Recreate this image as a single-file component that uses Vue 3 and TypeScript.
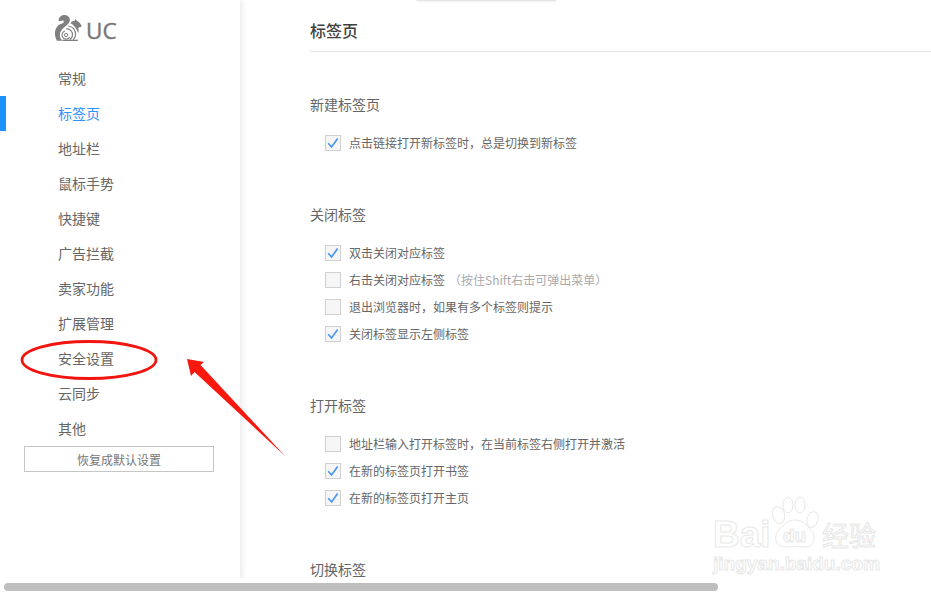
<script setup lang="ts">
interface Opt { label: string; note?: string; checked: boolean }
interface Group { title: string; options: Opt[] }

const navItems: string[] = ['常规', '标签页', '地址栏', '鼠标手势', '快捷键', '广告拦截', '卖家功能', '扩展管理', '安全设置', '云同步', '其他']
const activeNav = '标签页'

const groups: Group[] = [
  { title: '新建标签页', options: [{ label: '点击链接打开新标签时，总是切换到新标签', checked: true }] },
  {
    title: '关闭标签',
    options: [
      { label: '双击关闭对应标签', checked: true },
      { label: '右击关闭对应标签', note: '（按住Shift右击可弹出菜单）', checked: false },
      { label: '退出浏览器时，如果有多个标签则提示', checked: false },
      { label: '关闭标签显示左侧标签', checked: true },
    ],
  },
  {
    title: '打开标签',
    options: [
      { label: '地址栏输入打开标签时，在当前标签右侧打开并激活', checked: false },
      { label: '在新的标签页打开书签', checked: true },
      { label: '在新的标签页打开主页', checked: true },
    ],
  },
  { title: '切换标签', options: [] },
]
</script>

<template>
  <div class="page">
    <div class="body">
      <aside class="side">
        <div class="logo">
          <svg class="squirrel" viewBox="0 0 80 78" width="27" height="26">
            <path fill="#808080" d="M5 77C-3 62-3 44 8 32 15 25 25 26 26 20 26 15 20 16 15 19 9 20 9 12 14 6 22-3 37-2 43 9 47 18 41 26 33 32 23 39 14 49 14 60 14 67 17 73 22 77Z" />
            <circle cx="33" cy="60" r="5" fill="none" stroke="#808080" stroke-width="3" />
            <path fill="none" stroke="#808080" stroke-width="3.5" d="M44 66A12.5 12.5 0 1 1 29 48" />
            <path fill="none" stroke="#808080" stroke-width="3.5" d="M33 41C45 41 53 50 52 61 51 67 48 71 44 74" />
            <path fill="none" stroke="#808080" stroke-width="3.5" d="M39 33C53 34 63 46 61 61 60 67 57 71 54 74" />
            <path fill="#808080" d="M46 25C49 19 53 17 58 18L61 12 66 18C73 21 77 28 80 34 75 37 71 38 69 38 71 44 71 50 69 54 64 40 56 30 46 25Z" />
            <path fill="#808080" d="M22 74H68V78H22Z" />
          </svg>
          <span class="uc">UC</span>
        </div>
        <nav class="nav">
          <a v-for="item in navItems" :key="item" class="nav-item" :class="{ active: item === activeNav }">{{ item }}</a>
        </nav>
        <button class="reset" type="button">恢复成默认设置</button>
      </aside>
      <main class="main">
        <h1 class="title">标签页</h1>
        <section v-for="g in groups" :key="g.title" class="group">
          <h2 class="group-title">{{ g.title }}</h2>
          <label v-for="o in g.options" :key="o.label" class="row">
            <span class="box">
              <svg v-if="o.checked" viewBox="0 0 16 16" width="16" height="16">
                <path d="M3.2 8.2 6.6 12 12.6 3.6" fill="none" stroke="#4b96f5" stroke-width="1.7" />
              </svg>
            </span>
            <span>{{ o.label }}</span>
            <span v-if="o.note" class="note">{{ o.note }}</span>
          </label>
        </section>
      </main>
    </div>
    <div class="track"><div class="thumb"></div></div>

    <div class="tab-hint"></div>

    <svg class="annot" viewBox="0 0 931 595" width="931" height="595">
      <ellipse cx="89" cy="360" rx="67" ry="18.5" fill="none" stroke="#f2150f" stroke-width="2.8" />
      <polygon fill="#f8180e" points="187,359 204,362 200.5,365 285,456 194.5,372 191,376" />
    </svg>

    <div class="mark">
      <span class="mark-bai">Bai</span>
      <svg class="paw" viewBox="767 494 56 56" width="56" height="56">
        <g fill="none" stroke="#e8e8e8" stroke-width="1">
          <ellipse cx="778.5" cy="515" rx="6" ry="8.5" transform="rotate(-15 778.5 515)" />
          <ellipse cx="788" cy="505" rx="5" ry="8" />
          <ellipse cx="800" cy="505" rx="5" ry="8" />
          <ellipse cx="812.5" cy="519.5" rx="5.5" ry="8" transform="rotate(15 812.5 519.5)" />
          <path d="M795 520C803 520 807 526 811 530 817 536 815 548 804 547 798 546 792 546 786 547 775 548 773 536 779 530 783 526 787 520 795 520Z" />
        </g>
      </svg>
      <span class="mark-du">du</span>
      <span class="mark-jy">经验</span>
      <span class="mark-url">jingyan.baidu.com</span>
    </div>
  </div>
</template>

<style>
html, body { margin: 0; overflow: hidden; background: #fff; }
</style>

<style scoped>
.page {
  position: relative;
  width: 931px;
  height: 595px;
  overflow: hidden;
  background: #fff;
  font-family: "Noto Sans CJK SC", "Liberation Sans", sans-serif;
  color: #666;
}
.body { display: flex; height: 579px; overflow: hidden; }
.side {
  flex: none;
  width: 240px;
  box-shadow: 3px 0 5px rgba(0, 0, 0, 0.07);
  position: relative;
  background: #fff;
}
.logo { display: flex; align-items: center; height: 26px; margin: 15px 0 0 55px; gap: 4px; }
.squirrel { flex: none; }
.uc {
  font-family: "Open Sans", sans-serif;
  font-size: 22.5px;
  font-weight: 400;
  color: #777;
  -webkit-text-stroke: 0.4px #777;
  line-height: 26px;
  padding-top: 6px;
}
.nav { display: flex; flex-direction: column; margin-top: 20px; }
.nav-item {
  height: 35px;
  line-height: 35px;
  padding-left: 58px;
  font-size: 14px;
  color: #666;
  box-sizing: border-box;
}
.nav-item.active { color: #2f93ff; box-shadow: inset 6px 0 0 #1e90ff; }
.reset {
  display: block;
  width: 190px;
  height: 26px;
  margin: 0 0 0 24px;
  padding: 0;
  border: 1px solid #c6c6c6;
  background: #fff;
  color: #777;
  font: 12px "Noto Sans CJK SC", sans-serif;
}
.main { flex: 1; padding-left: 70px; min-width: 0; }
.title {
  margin: 0;
  height: 51px;
  line-height: 60px;
  font-size: 16px;
  font-weight: 500;
  color: #3f3f3f;
  border-bottom: 1px solid #e3e3e3;
}
.group { padding-top: 48px; }
.group:first-of-type { padding-top: 42px; }
.group-title {
  margin: 0 0 15px;
  font-size: 14px;
  font-weight: 400;
  line-height: 20px;
  color: #666;
}
.row {
  display: flex;
  align-items: center;
  height: 27px;
  padding-left: 15px;
  font-size: 12px;
  color: #666;
}
.box {
  flex: none;
  width: 16px;
  height: 16px;
  box-sizing: border-box;
  border: 1px solid #d0d0d0;
  background: #f6f6f6;
  margin-right: 8px;
  position: relative;
}
.box svg { position: absolute; left: -1px; top: -1px; }
.note { color: #aaa; margin-left: 4px; }
.track { height: 16px; padding: 4px; box-sizing: border-box; background: #fff; }
.thumb { width: 714px; height: 8px; border-radius: 4px; background: #bebebe; }
.tab-hint {
  position: absolute;
  left: 416px;
  top: -2px;
  width: 140px;
  height: 2px;
  box-shadow: 0 1px 2px rgba(0, 0, 0, 0.15);
}
.annot { position: absolute; left: 0; top: 0; pointer-events: none; }
.mark { position: absolute; left: 0; top: 0; width: 931px; height: 595px; pointer-events: none; }
.mark span {
  position: absolute;
  color: transparent;
  -webkit-text-stroke: 1px #e8e8e8;
  font-family: "Liberation Sans", sans-serif;
  font-weight: 700;
}
.paw { position: absolute; left: 767px; top: 494px; }
.mark-bai { left: 713px; top: 515px; font-size: 37px; line-height: 40px; }
.mark-du { left: 783px; top: 524px; font-size: 19px; line-height: 24px; }
.mark .mark-jy { left: 822px; top: 516px; font-size: 27px; line-height: 38px; font-family: "Noto Sans CJK SC", sans-serif; font-weight: 400; }
.mark-url { left: 713px; top: 551px; font-size: 19px; line-height: 26px; }
</style>
